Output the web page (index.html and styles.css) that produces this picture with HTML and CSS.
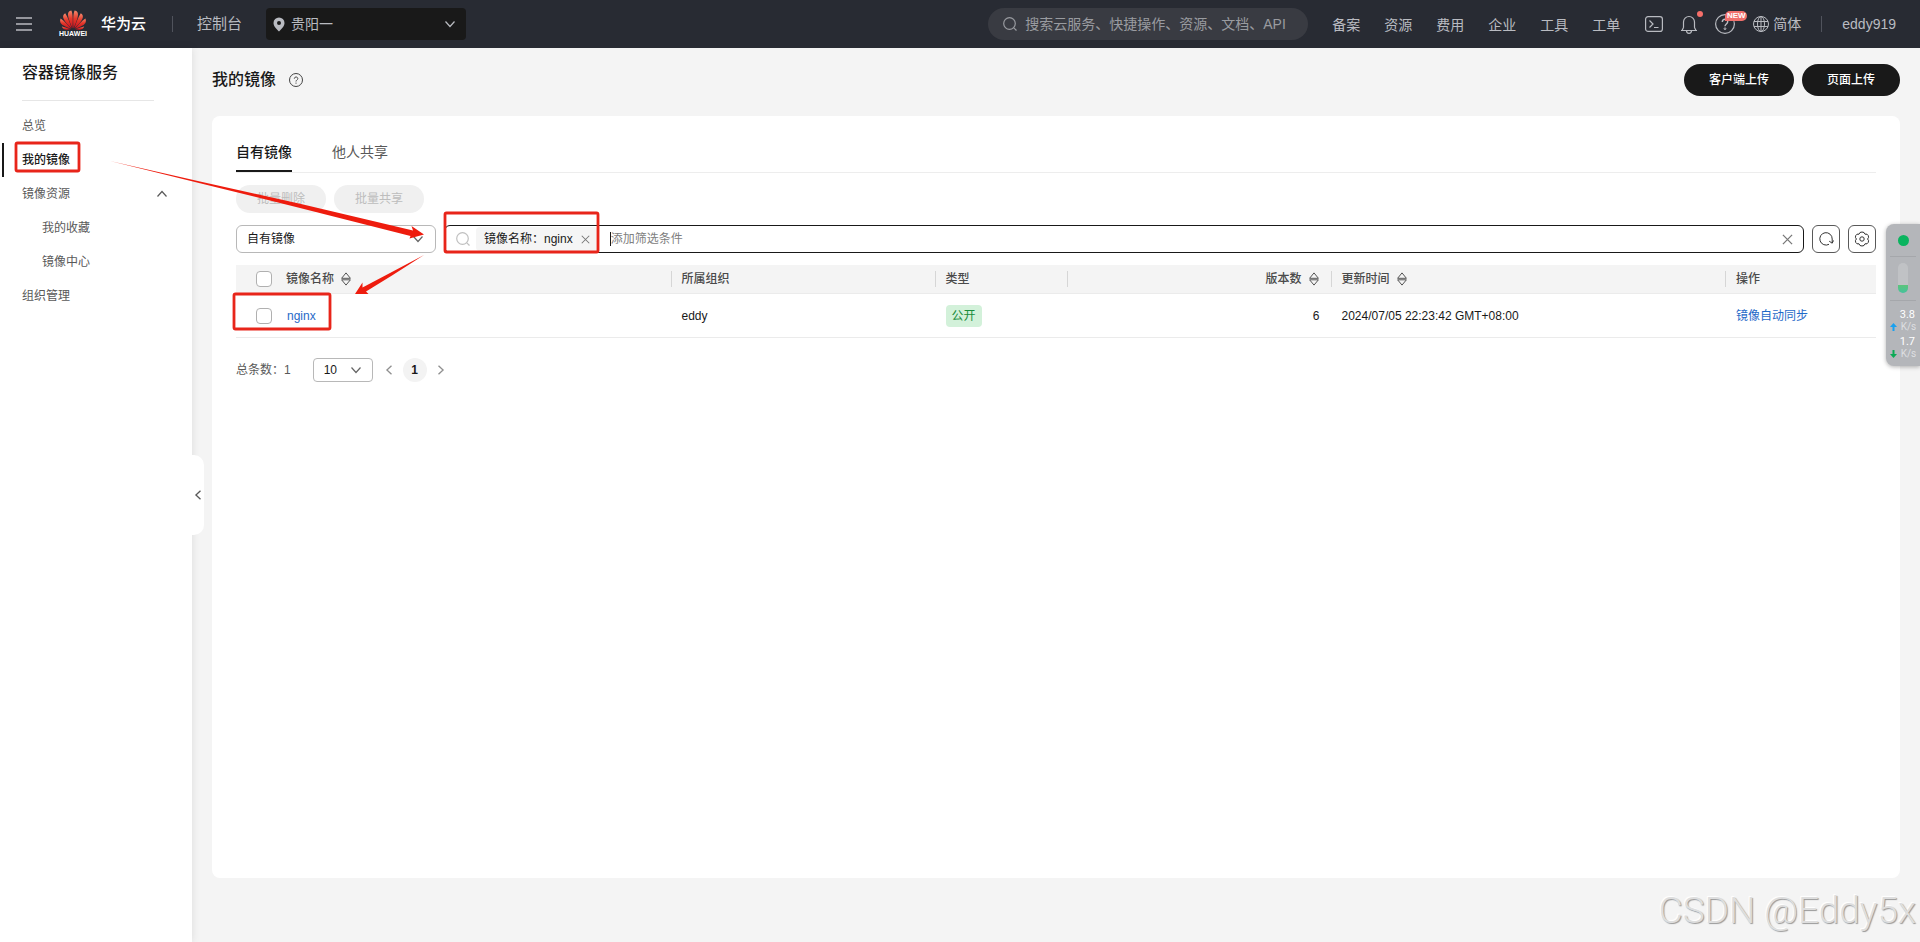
FILE: index.html
```html
<!DOCTYPE html>
<html lang="zh-CN">
<head>
<meta charset="utf-8">
<title>容器镜像服务</title>
<link rel="stylesheet" href="styles.css">
</head>
<body>
<svg class="defs" aria-hidden="true">
  <symbol id="down" viewBox="0 0 12 12"><path d="M1.500 3.500 6 8.500l4.500-5" fill="none" stroke="currentColor" stroke-width="1.200"/></symbol>
  <symbol id="up" viewBox="0 0 12 12"><path d="M1.500 8.500 6 3.500l4.500 5" fill="none" stroke="currentColor" stroke-width="1.200"/></symbol>
  <symbol id="left" viewBox="0 0 12 12"><path d="M9 .800 3.500 6l5.500 5.200" fill="none" stroke="currentColor" stroke-width="1.600"/></symbol>
  <symbol id="right" viewBox="0 0 12 12"><path d="M3 .800 8.500 6l-5.500 5.200" fill="none" stroke="currentColor" stroke-width="1.600"/></symbol>
  <symbol id="close" viewBox="0 0 12 12"><path d="M1 1l10 10M11 1 1 11" fill="none" stroke="currentColor" stroke-width="1.400"/></symbol>
  <symbol id="search" viewBox="0 0 14 14"><g fill="none" stroke="currentColor" stroke-width="1.200"><circle cx="6.500" cy="6.500" r="5.800"/><path d="M10.800 10.800l2.700 2.700"/></g></symbol>
  <symbol id="sort" viewBox="0 0 10 14"><path d="M.6 6.300 5 .900l4.400 5.400zM.6 7.800h8.800L5 13.100z" fill="none" stroke="currentColor" stroke-linejoin="round"/></symbol>
</svg>

<header class="topbar">
  <button class="menu-btn" aria-label="菜单"><svg width="16" height="14" viewBox="0 0 16 14"><path d="M0 1h16M0 7h16M0 13h16" stroke="currentColor" stroke-width="1.600"/></svg></button>
  <a class="brand" href="#">
    <span class="logo">
      <svg width="26" height="20" viewBox="0 0 26 20" aria-hidden="true">
        <defs><linearGradient id="petal" x1="0" y1="0" x2="0" y2="1"><stop offset="0" stop-color="#f58b6e"/><stop offset=".45" stop-color="#e5382b"/><stop offset="1" stop-color="#c8101e"/></linearGradient></defs>
        <g fill="url(#petal)">
          <path d="M12.500 18.500C12.900 11 13 4 11.400.400 8.700.800 7.800 2.600 8 5c.3 4 2.600 8.800 4.500 13.500z"/>
          <path d="M13.500 18.500C13.100 11 13 4 14.600.400c2.700.400 3.600 2.200 3.400 4.600-.3 4-2.600 8.800-4.500 13.500z"/>
          <path d="M11.700 18.600C9.900 12.500 7.500 7 5.200 3.300 3.200 4.600 2.600 6.400 3.500 8.600c1.300 3.400 4.700 6.900 8.200 10z"/>
          <path d="M14.300 18.600c1.800-6.100 4.200-11.600 6.500-15.300 2 1.300 2.600 3.100 1.700 5.300-1.300 3.400-4.700 6.900-8.200 10z"/>
          <path d="M11.100 18.700C7.700 14.500 4 11 .600 8.400c-1 2.600-.5 4.800 1.600 6.300 2.200 1.500 5.700 3 8.900 4z"/>
          <path d="M14.900 18.700c3.400-4.200 7.100-7.700 10.500-10.300 1 2.600.5 4.800-1.600 6.300-2.200 1.500-5.700 3-8.900 4z"/>
          <path d="M10.700 19.200c-3.200-.9-5.900-1.900-8.900-2.700.9 2.400 2.800 3.300 5 3.200 1.400 0 2.700-.2 3.900-.5z"/>
          <path d="M15.300 19.200c3.200-.9 5.900-1.900 8.900-2.700-.9 2.400-2.800 3.300-5 3.200-1.400 0-2.700-.2-3.900-.5z"/>
        </g>
      </svg>
      <span class="logo-text">HUAWEI</span>
    </span>
    <span class="brand-name">华为云</span>
  </a>
  <span class="bar-divider"></span>
  <a class="console" href="#">控制台</a>
  <label class="region">
    <svg width="12" height="15" viewBox="0 0 12 15"><path fill="currentColor" fill-rule="evenodd" d="M6 .500a5.500 5.500 0 0 1 5.500 5.500C11.500 9.500 8 12.500 6 14.500 4 12.500.5 9.500.5 6A5.500 5.500 0 0 1 6 .500zM6 4a2 2 0 1 0 0 4 2 2 0 0 0 0-4z"/></svg>
    <select aria-label="区域"><option>贵阳一</option></select>
    <svg class="caret" width="12" height="12"><use href="#down"/></svg>
  </label>
  <label class="top-search">
    <svg width="14" height="14"><use href="#search"/></svg>
    <input type="text" aria-label="搜索" placeholder="搜索云服务、快捷操作、资源、文档、API">
  </label>
  <nav class="top-nav">
    <a href="#">备案</a><a href="#">资源</a><a href="#">费用</a><a href="#">企业</a><a href="#">工具</a><a href="#">工单</a>
  </nav>
  <div class="top-tools">
    <button aria-label="CloudShell"><svg width="18" height="16" viewBox="0 0 18 16" fill="none" stroke="currentColor" stroke-width="1.200"><rect x=".6" y=".6" width="16.800" height="14.800" rx="2.500"/><path d="M4.500 4.500 8 8l-3.500 3.500M9 11.500h4.500"/></svg></button>
    <button class="bell" aria-label="消息"><svg width="16" height="19" viewBox="0 0 16 19" fill="none" stroke="currentColor" stroke-width="1.200"><path d="M0 15.500h16M2.500 12.500V7a5.500 5.500 0 0 1 11 0v5.500M1 15.500l1.500-3M15 15.500l-1.500-3M5.500 15.500c0 3.800 5 3.800 5 0"/></svg><span class="dot"></span></button>
    <button class="help" aria-label="帮助"><svg width="20" height="20" viewBox="0 0 20 20" fill="none" stroke="currentColor"><circle cx="10" cy="10" r="9.400" stroke-width="1.200"/><path d="M7.300 8c0-3.700 5.400-3.600 5.400-.2 0 2.200-2.700 2.200-2.700 4.500" stroke-width="1.400"/><circle cx="10" cy="14.700" r=".9"/></svg><span class="new">NEW</span></button>
    <button class="lang"><svg width="16" height="16" viewBox="0 0 16 16" fill="none" stroke="currentColor"><circle cx="8" cy="8" r="7.500"/><ellipse cx="8" cy="8" rx="3.500" ry="7.500"/><path d="M8 .5v15M1 5.500h14M1 10.500h14"/></svg>简体</button>
  </div>
  <span class="bar-divider"></span>
  <a class="user" href="#">eddy919</a>
</header>

<div class="shell">
  <aside class="sidebar">
    <h2>容器镜像服务</h2>
    <nav class="side-nav">
      <a href="#">总览</a>
      <a class="active" href="#">我的镜像</a>
      <a href="#">镜像资源<svg width="12" height="12"><use href="#up"/></svg></a>
      <a class="sub" href="#">我的收藏</a>
      <a class="sub" href="#">镜像中心</a>
      <a href="#">组织管理</a>
    </nav>
    <button class="collapse" aria-label="收起"><svg width="10" height="10"><use href="#left"/></svg></button>
  </aside>

  <main class="main">
    <div class="page-head">
      <h1>我的镜像</h1>
      <svg width="14" height="14" viewBox="0 0 14 14" fill="none" stroke="currentColor"><circle cx="7" cy="7" r="6.500"/><path d="M5.300 5.700c0-2.300 3.500-2.200 3.500-.1C8.800 7 7 7 7 8.500M7 9.600v1.100"/></svg>
      <div class="head-actions">
        <button class="primary">客户端上传</button>
        <button class="primary">页面上传</button>
      </div>
    </div>

    <section class="card">
      <div class="tabs" role="tablist">
        <button class="tab selected" role="tab" aria-selected="true">自有镜像</button>
        <button class="tab" role="tab">他人共享</button>
      </div>
      <div class="batch">
        <button disabled>批量删除</button>
        <button disabled>批量共享</button>
      </div>
      <div class="filters">
        <label class="select owner">
          <select aria-label="镜像范围"><option>自有镜像</option></select>
          <svg width="12" height="12"><use href="#down"/></svg>
        </label>
        <div class="filter-box">
          <svg class="lens" width="14" height="14"><use href="#search"/></svg>
          <span class="chip">镜像名称：nginx<button aria-label="移除"><svg width="9" height="9"><use href="#close"/></svg></button></span>
          <input type="text" aria-label="筛选条件" placeholder="添加筛选条件">
          <button class="clear" aria-label="清空"><svg width="11" height="11"><use href="#close"/></svg></button>
        </div>
        <button class="square" aria-label="刷新"><svg width="16" height="16" viewBox="0 0 16 16" fill="none" stroke="currentColor"><path d="M11 13.300A6.200 6.200 0 1 1 14.200 8v3.500M11.200 10.200l3 2 1.300-2.700"/></svg></button>
        <button class="square" aria-label="设置"><svg width="16" height="16" viewBox="0 0 16 16" fill="none" stroke="currentColor"><path d="M6 1.500Q8 .5 10 1.500L11 3.200h2Q14.600 4.200 14.600 6.300L13.600 8l1 1.700Q14.600 11.800 13 12.800h-2L10 14.500Q8 15.500 6 14.500L5 12.800H3Q1.400 11.800 1.400 9.700L2.400 8l-1-1.700Q1.400 4.200 3 3.200h2z"/><circle cx="8" cy="8" r="2.200"/></svg></button>
      </div>
      <table class="grid">
        <colgroup><col class="c-check"><col><col class="c-wide"><col class="c-type"><col class="c-wide"><col><col class="c-op"></colgroup>
        <thead>
          <tr>
            <th class="check"><input type="checkbox" aria-label="全选"></th>
            <th><span>镜像名称<svg width="10" height="14"><use href="#sort"/></svg></span></th>
            <th class="sep"><span>所属组织</span></th>
            <th class="sep"><span>类型</span></th>
            <th class="sep num"><span>版本数<svg width="10" height="14"><use href="#sort"/></svg></span></th>
            <th class="sep"><span>更新时间<svg width="10" height="14"><use href="#sort"/></svg></span></th>
            <th class="sep"><span>操作</span></th>
          </tr>
        </thead>
        <tbody>
          <tr>
            <td class="check"><input type="checkbox" aria-label="选择 nginx"></td>
            <td><a href="#">nginx</a></td>
            <td>eddy</td>
            <td><span class="public">公开</span></td>
            <td class="num">6</td>
            <td>2024/07/05 22:23:42 GMT+08:00</td>
            <td><a href="#">镜像自动同步</a></td>
          </tr>
        </tbody>
      </table>
      <div class="pager">
        <span class="total">总条数：1</span>
        <label class="select size">
          <select aria-label="每页条数"><option>10</option></select>
          <svg width="12" height="12"><use href="#down"/></svg>
        </label>
        <button class="page-arrow" aria-label="上一页"><svg width="10" height="10"><use href="#left"/></svg></button>
        <button class="page-num">1</button>
        <button class="page-arrow" aria-label="下一页"><svg width="10" height="10"><use href="#right"/></svg></button>
      </div>
    </section>
  </main>
</div>

<aside class="net">
  <span class="net-dot"></span>
  <span class="net-line"></span>
  <span class="net-tube"></span>
  <span class="net-line"></span>
  <div class="net-rate"><b>3.8</b><span><svg class="rise" width="7" height="8" viewBox="0 0 7 8"><path d="M3.500 0 7 4H4.500v4h-2V4H0z" fill="currentColor"/></svg>K/s</span></div>
  <div class="net-rate"><b>1.7</b><span><svg class="fall" width="7" height="8" viewBox="0 0 7 8"><path d="M3.500 8 0 4h2.500V0h2v4H7z" fill="currentColor"/></svg>K/s</span></div>
</aside>

<svg class="marks" width="620" height="350" viewBox="0 0 620 350" aria-hidden="true">
  <g fill="none" stroke="#e8251a" stroke-width="2.800">
    <rect x="16" y="143" width="63" height="28" rx="1.500"/>
    <rect x="445" y="213" width="153" height="39" rx="1.500"/>
    <rect x="234" y="294" width="96" height="35" rx="1.500"/>
  </g>
  <g fill="#ee1c0e">
    <path d="M110 161 200 181.500 300 203.800 413 230.500 411.500 226 424 234.500 409.500 238.500 410.500 236 300 208 200 183.200z"/>
    <path d="M424 255 390 273 362.500 287.500 362.500 282.500 355 294 368.500 294 366 291.500 392 275.500z"/>
  </g>
</svg>
<div class="watermark">CSDN @Eddy5x</div>
</body>
</html>
```
FILE: styles.css
```css
* { box-sizing: border-box; }
body {
  margin: 0;
  min-height: 100vh;
  display: flex;
  flex-direction: column;
  position: relative;
  overflow-x: hidden;
  background: #f4f4f4;
  color: #191919;
  font: 12px/18px "Liberation Sans", "Noto Sans CJK SC", sans-serif;
}
button, input, select { font: inherit; color: inherit; }
button { border: 0; padding: 0; background: none; display: inline-flex; align-items: center; justify-content: center; }
select { appearance: none; border: 0; padding: 0; background: none; flex: 1; min-width: 0; outline: 0; }
a { color: inherit; text-decoration: none; }
svg { flex: none; }
.defs { position: absolute; width: 0; height: 0; }

.topbar {
  height: 48px;
  display: flex;
  align-items: center;
  padding: 0 24px 0 16px;
  background: #282b33;
  color: #b9bbc1;
  font-size: 14px;
}
.brand { display: flex; align-items: center; margin-left: 27px; gap: 14px; }
.logo { display: flex; flex-direction: column; align-items: center; color: #fff; }
.logo-text { font: bold 7px/8px "Liberation Sans", sans-serif; }
.brand-name { color: #fff; font-size: 15px; font-weight: 500; }
.bar-divider { width: 1px; height: 16px; margin: 0 20px 0 26px; background: #50535c; }
.console { margin-left: 4px; font-size: 15px; }
.region {
  display: flex;
  align-items: center;
  gap: 6px;
  width: 200px;
  height: 32px;
  margin-left: 24px;
  padding: 0 10px 0 7px;
  border-radius: 4px;
  background: #191919;
}
.top-search {
  display: flex;
  align-items: center;
  gap: 8px;
  width: 320px;
  height: 32px;
  margin-left: auto;
  padding: 0 15px;
  border-radius: 16px;
  background: #393b42;
  color: #999ba0;
}
.top-search input { flex: 1; min-width: 0; padding: 0; border: 0; background: none; outline: 0; }
::placeholder { color: inherit; opacity: 1; }
.top-nav { display: flex; gap: 24px; margin-left: 24px; padding-top: 1px; }
.top-tools { display: flex; align-items: center; gap: 18px; margin-left: 25px; }
.bell, .help { position: relative; }
.dot { position: absolute; top: -4px; right: -6px; width: 6px; height: 6px; border-radius: 50%; background: #f66f6a; }
.new { position: absolute; top: -3px; left: 10px; width: 22px; border-radius: 5px 5px 5px 0; background: #f0706c; color: #fff; font: bold 8px/10px "Liberation Sans", sans-serif; }
.lang { gap: 4px; }
.topbar .bar-divider:nth-last-child(2) { margin-left: 20px; }

.shell { flex: 1; display: flex; }
.sidebar { position: relative; width: 192px; padding: 13px 0 0; background: #fff; box-shadow: 0 0 8px rgba(0, 0, 0, .1); }
.sidebar h2 { margin: 0 38px 8px 22px; padding-bottom: 15px; border-bottom: 1px solid #e6e6e6; font-size: 16px; line-height: 24px; font-weight: 500; }
.side-nav a { display: flex; align-items: center; height: 34px; margin-left: 2px; padding: 0 24px 0 18px; border-left: 2px solid transparent; color: #595959; }
.side-nav svg { margin-left: auto; }
.side-nav .sub { padding-left: 38px; }
.side-nav .active { border-color: #191919; color: #191919; font-weight: 500; }
.collapse { position: absolute; left: 192px; top: 407px; width: 12px; height: 80px; border-radius: 0 10px 10px 0; background: #fff; color: #595959; }

.main { flex: 1; min-width: 0; display: flex; flex-direction: column; padding: 16px 20px 64px; }
.page-head { display: flex; align-items: center; gap: 13px; margin-bottom: 20px; }
.page-head h1 { margin: 0; font-size: 16px; line-height: 24px; font-weight: 500; }
.page-head > svg { color: #444; }
.head-actions { display: flex; gap: 8px; margin-left: auto; }
.primary { height: 32px; padding: 0 25px; border-radius: 16px; background: #191919; color: #fff; font-weight: 500; }
.card { flex: 1; padding: 16px 24px; border-radius: 8px; background: #fff; }
.tabs { display: flex; gap: 40px; border-bottom: 1px solid #ededed; }
.tab { height: 40px; padding-top: 2px; border-bottom: 2px solid transparent; color: #595959; font-size: 14px; }
.tab.selected { border-color: #191919; color: #191919; font-weight: 500; }
.batch { display: flex; gap: 8px; margin: 12px 0; }
.batch button { width: 90px; height: 28px; border-radius: 14px; background: #f0f0f0; color: #bdbdbd; }
.filters { display: flex; gap: 8px; margin-bottom: 12px; }
.select { display: flex; align-items: center; border: 1px solid #b8b8b8; border-radius: 6px; }
.select svg { color: #666; }
.owner { width: 200px; height: 28px; padding: 0 11px 0 10px; }
.filter-box { flex: 1; display: flex; align-items: center; height: 28px; padding: 0 10px 0 11px; border: 1px solid #191919; border-radius: 6px; }
.lens { color: #c0c0c0; }
.chip { display: flex; align-items: center; gap: 8px; height: 24px; margin: 0 12px 0 6px; padding: 0 8px; border-radius: 4px; background: #f5f5f5; color: #191919; }
.chip button, .clear { color: #777; }
.filter-box input { flex: 1; min-width: 0; height: 14px; padding: 0; border: 0; border-left: 1px solid #191919; outline: 0; background: none; color: #808080; }
.square { width: 28px; height: 28px; border: 1px solid #595959; border-radius: 6px; color: #333; }

.grid { width: 100%; table-layout: fixed; border-collapse: separate; border-spacing: 0; }
.c-check { width: 40px; }
.c-wide { width: 264px; }
.c-type { width: 132px; }
.c-op { width: 151px; }
.grid th { height: 29px; padding: 0 10px; background: #f4f4f4; border-bottom: 1px solid #ebebeb; color: #4a4a4a; text-align: left; font-weight: 500; }
.grid th span { display: flex; align-items: center; gap: 7px; height: 16px; }
.grid th.sep { padding-left: 0; }
.grid th.sep span { padding-left: 10px; border-left: 1px solid #d6d6d6; }
.grid th.num { padding-right: 12px; }
.grid th.num span { justify-content: flex-end; }
.grid th svg { color: #555; }
.grid td { height: 44px; padding: 0 11px; border-bottom: 1px solid #ebebeb; }
.grid .num { text-align: right; }
.grid .check { padding: 0 0 0 20px; }
.grid input { display: block; appearance: none; width: 16px; height: 16px; margin: 0; border: 1px solid #b0b0b0; border-radius: 4px; background: #fff; }
.grid a { color: #1f69c8; }
.public { display: inline-block; padding: 2px 6px; border-radius: 4px; background: #d3f1da; color: #198c3c; }

.pager { display: flex; align-items: center; margin-top: 20px; color: #595959; }
.size { width: 60px; height: 24px; margin: 0 10px 0 22px; padding: 0 10px; border-radius: 4px; color: #191919; }
.page-arrow { width: 12px; color: #909090; }
.page-num { width: 24px; height: 24px; margin: 0 8px; border-radius: 50%; background: #f3f3f3; color: #191919; font-weight: 700; }

.net {
  position: absolute;
  top: 224px;
  right: 0;
  width: 34px;
  height: 142px;
  display: flex;
  flex-direction: column;
  align-items: center;
  border-radius: 8px 0 0 8px;
  background: #b4b6ba;
  color: #fff;
  box-shadow: 0 1px 4px rgba(0, 0, 0, .3);
}
.net-dot { width: 11px; height: 11px; margin: 11px 0 10px; border-radius: 50%; background: #0ab45f; }
.net-line { width: 26px; height: 1px; background: #a5a7ab; }
.net-tube { width: 10px; height: 30px; margin: 6px 0 7px; border-radius: 5px; background: linear-gradient(#c0c2c5 0 73%, #5cc47c 74%, #45c29c); }
.net-rate { padding-top: 1px; margin-bottom: 1px; font: 11px/13px Roboto, sans-serif; }
.net-line + .net-rate { margin-top: 6px; }
.net-rate b { display: block; padding-left: 10px; font-weight: 400; }
.net-rate span { display: flex; align-items: center; gap: 4px; font-size: 10px; line-height: 12px; color: #dedfe1; }
.rise { color: #18a0f0; }
.fall { color: #0aaa55; }

.marks { position: absolute; left: 0; top: 0; pointer-events: none; }
.watermark {
  position: absolute;
  right: 4px;
  bottom: 8px;
  font: 300 37px/46px Roboto, sans-serif;
  color: #dedede;
  text-shadow: 1px 1px 1px #999, -1px -1px 1px #fff;
}
```
